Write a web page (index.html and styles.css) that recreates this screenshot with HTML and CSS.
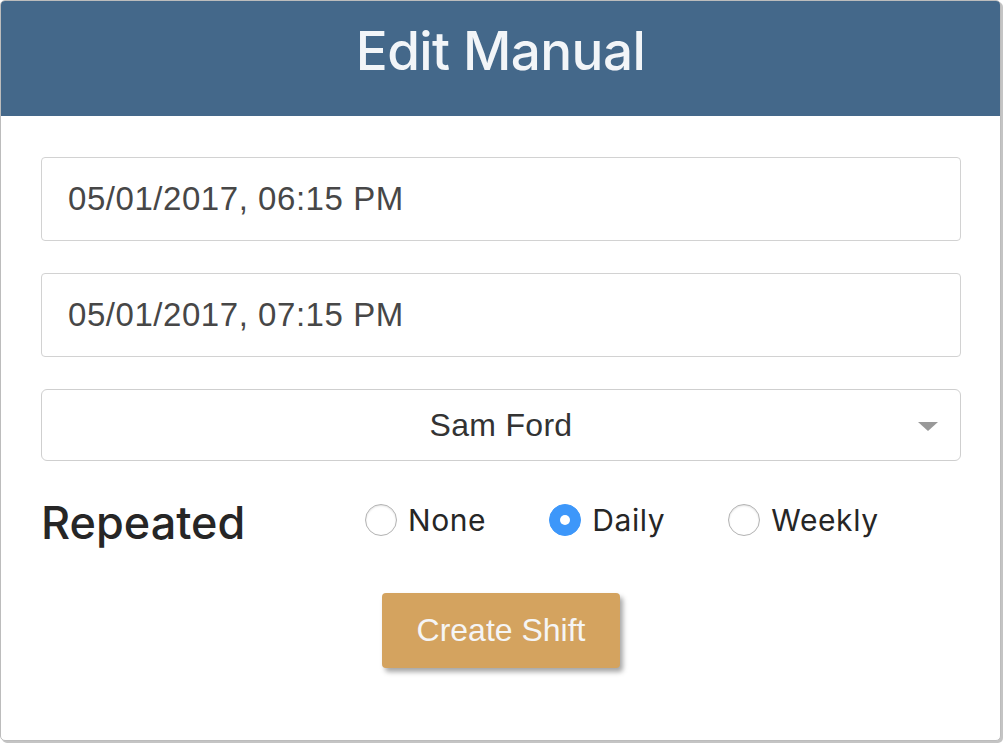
FILE: index.html
```html
<!DOCTYPE html>
<html>
<head>
<meta charset="utf-8">
<link rel="stylesheet" href="styles.css">
</head>
<body>
<div class="modal">
  <div class="modal-header">
    <h1 class="modal-title">Edit Manual</h1>
  </div>
  <div class="modal-body">
    <div class="field">05/01/2017, 06:15 PM</div>
    <div class="field">05/01/2017, 07:15 PM</div>
    <div class="select">
      <span class="select-value">Sam Ford</span>
      <span class="select-arrow"></span>
    </div>
    <div class="repeat-row">
      <div class="repeat-label">Repeated</div>
      <div class="radio-group">
        <label class="radio"><span class="radio-dot"></span><span class="radio-text">None</span></label>
        <label class="radio"><span class="radio-dot checked"></span><span class="radio-text">Daily</span></label>
        <label class="radio"><span class="radio-dot"></span><span class="radio-text">Weekly</span></label>
      </div>
    </div>
    <div class="actions">
      <button class="btn-create">Create Shift</button>
    </div>
  </div>
</div>
</body>
</html>
```
FILE: styles.css
```css
* { box-sizing: border-box; }
html, body { margin: 0; padding: 0; background: #fff; }
body { width: 1003px; height: 743px; overflow: hidden; }

.modal {
  width: 1001px;
  height: 741px;
  border: 1px solid #bcbcbc;
  border-radius: 5px;
  box-shadow: 2px 2px 0 #c4c4c4;
  background: #fff;
  overflow: hidden;
}

.modal-header {
  height: 115px;
  background: #44688a;
  display: flex;
  align-items: center;
  justify-content: center;
}

.modal-title {
  margin: 0;
  font-family: Inter, "Liberation Sans", sans-serif;
  font-weight: 500;
  font-size: 53px;
  color: #f2f5f8;
  letter-spacing: -0.6px;
  padding-bottom: 16px;
}

.modal-body {
  padding: 41px 39px 0 40px;
}

.field {
  height: 84px;
  border: 1px solid #d2d2d2;
  border-radius: 4px;
  display: flex;
  align-items: center;
  padding-left: 26px;
  font-family: "Liberation Sans", Arial, sans-serif;
  font-size: 33px;
  letter-spacing: 0.55px;
  color: #474747;
  margin-bottom: 32px;
}

.select {
  height: 72px;
  border: 1px solid #cfcfcf;
  border-radius: 6px;
  display: flex;
  align-items: center;
  justify-content: center;
  position: relative;
  font-family: "Liberation Sans", Arial, sans-serif;
  font-size: 32px;
  letter-spacing: 0.3px;
  color: #333;
}

.select-arrow {
  position: absolute;
  right: 22px;
  top: 32px;
  width: 0;
  height: 0;
  border-left: 10px solid transparent;
  border-right: 10px solid transparent;
  border-top: 9px solid #999;
}

.repeat-row {
  display: flex;
  align-items: center;
  height: 60px;
  margin-top: 29px;
}

.repeat-label {
  width: 324px;
  font-family: Inter, "Liberation Sans", sans-serif;
  font-weight: 500;
  font-size: 45px;
  color: #262626;
  letter-spacing: 0;
  padding-top: 4px;
}

.radio-group {
  display: flex;
  align-items: center;
  gap: 63px;
}

.radio {
  display: flex;
  align-items: center;
  gap: 11px;
  font-family: Inter, "Liberation Sans", sans-serif;
  font-size: 30px;
  letter-spacing: 0.6px;
  color: #262626;
}

.radio-dot {
  width: 32px;
  height: 32px;
  border-radius: 50%;
  border: 1px solid #b3b3b3;
  background: #fff;
  box-shadow: inset 0 1px 2px rgba(0,0,0,0.12);
  position: relative;
}

.radio-dot.checked {
  background: #3d97fa;
  border-color: #3d97fa;
  box-shadow: none;
}

.radio-dot.checked::after {
  content: "";
  position: absolute;
  left: 10px;
  top: 10px;
  width: 10px;
  height: 10px;
  border-radius: 50%;
  background: #fff;
}

.actions {
  display: flex;
  justify-content: center;
  margin-top: 43px;
}

.btn-create {
  width: 238px;
  height: 75px;
  border: none;
  border-radius: 4px;
  background: #d4a35f;
  color: #f5f5f5;
  font-family: "Liberation Sans", Arial, sans-serif;
  font-size: 32px;
  box-shadow: 3px 4px 5px rgba(0,0,0,0.35);
  padding: 0;
}
```
